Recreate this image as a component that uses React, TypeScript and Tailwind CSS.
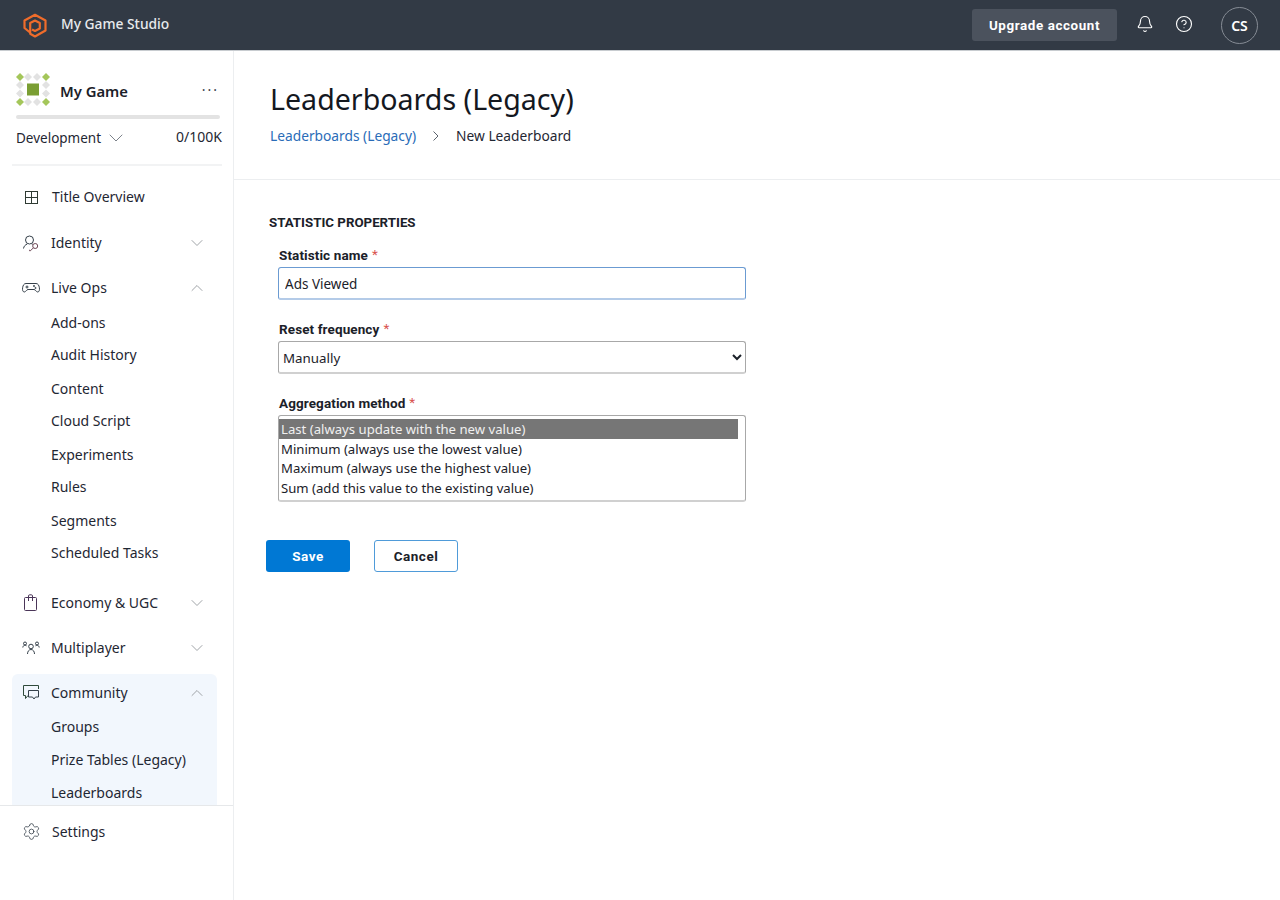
import { ChevronDown, ChevronUp, Bell, CircleHelp, Settings } from 'lucide-react';

const body = "font-['Noto_Sans','Open_Sans',sans-serif]";
const din = "font-['Roboto',sans-serif]";

function StudioLogo() {
  return (
    <svg width="24" height="26" viewBox="0 0 24 26" fill="none" stroke="#ef6c2b" strokeWidth="2.2" strokeLinejoin="round">
      <path d="M7 19.500L1.500 15V7.500L12 1.800l10.500 5.700v10L12 23.500l-4.800-2.800V10L12 7.500l4.800 2.500v5.500L12 18l-3-1.500" />
    </svg>
  );
}

function GameLogo() {
  const dots: [number, number, string][] = [
    [4, 4, '#a4c65a'], [12, 4, '#e2e2e2'], [21, 4, '#e2e2e2'], [30, 4, '#a4c65a'],
    [4, 12, '#e2e2e2'], [30, 12, '#e2e2e2'],
    [4, 20.5, '#e2e2e2'], [30, 20.5, '#e2e2e2'],
    [4, 29, '#a4c65a'], [12, 29, '#e2e2e2'], [21, 29, '#e2e2e2'], [30, 29, '#a4c65a'],
  ];
  return (
    <svg width="34" height="34" viewBox="0 0 34 34">
      {dots.map(([x, y, c]) => (
        <path key={`${x}-${y}`} d={`M${x} ${y - 4}l4 4-4 4-4-4z`} fill={c} />
      ))}
      <rect x="11" y="10.500" width="12" height="12" fill="#7a9e33" />
    </svg>
  );
}

function GridIcon() {
  return (
    <svg width="16" height="16" viewBox="0 0 16 16" fill="none" stroke="#2f3b33" strokeWidth="1">
      <rect x="2.500" y="2.500" width="12" height="12" />
      <path d="M8.500 2.500v12M2.500 8.500h12" />
    </svg>
  );
}

function IdentityIcon() {
  return (
    <svg width="18" height="18" viewBox="0 0 18 18" fill="none" stroke="#35404a" strokeWidth="1">
      <circle cx="7.500" cy="6" r="4" />
      <path d="M1.500 14.500c.4-2.300 1.800-3.800 3.700-4.400" />
      <path d="M9.800 10.200h1" />
      <circle cx="13.200" cy="12" r="2.500" stroke="#6d4655" />
      <path d="M11.400 13.800l-3 3h-.8v-1" stroke="#6d4655" />
    </svg>
  );
}

function GamepadIcon() {
  return (
    <svg width="18" height="18" viewBox="0 0 18 18" fill="none" stroke="#35404a" strokeWidth="1">
      <path d="M4 4.500h10c2 0 3 1.800 3.400 4.300.3 2.200-.2 4.200-1.700 4.200-1.500 0-2.200-2.500-3.700-2.500H6c-1.500 0-2.200 2.500-3.700 2.500C.8 13 .3 11 .6 8.800 1 6.300 2 4.500 4 4.500z" />
      <path d="M3.500 8h3M5 6.500v3" />
      <circle cx="12" cy="7" r=".6" />
      <circle cx="13.500" cy="9" r=".6" />
    </svg>
  );
}

function BagIcon() {
  return (
    <svg width="18" height="18" viewBox="0 0 18 18" fill="none" stroke="#4a3558" strokeWidth="1">
      <rect x="2.500" y="3.500" width="12" height="13" rx="1" />
      <path d="M6.500 7V2a1.200 1.200 0 0 1 1.200-1.200h1.600A1.200 1.200 0 0 1 10.500 2v5" />
    </svg>
  );
}

function PeopleIcon() {
  return (
    <svg width="18" height="14" viewBox="0 0 18 14" fill="none" stroke="#35404a" strokeWidth="1">
      <circle cx="9" cy="5.500" r="2.300" />
      <path d="M5.500 13c0-2.600 1.500-4.500 3.500-4.500s3.500 1.900 3.500 4.500" />
      <circle cx="3" cy="2.500" r="1.500" />
      <path d="M.800 6.500C1 5 1.900 4.200 3 4.200c.6 0 1.100.2 1.500.6" />
      <circle cx="15" cy="2.500" r="1.500" />
      <path d="M17.200 6.500C17 5 16.100 4.200 15 4.200c-.6 0-1.100.2-1.500.6" />
    </svg>
  );
}

function ChatIcon() {
  return (
    <svg width="18" height="17" viewBox="0 0 18 17" fill="none" strokeWidth="1">
      <path d="M16.500 5V1.500h-15v10h2v3l2.500-3" stroke="#2f4a3a" />
      <path d="M6.500 6.500h10v6.500h-3l-1.500 2-1.500-2h-4z" stroke="#35404a" />
    </svg>
  );
}

const SUB_ROW = 'h-[32px] [&:nth-child(2n+3)]:mt-[2px] flex items-center pl-[39px] text-[14px] text-[#1f2733]';

function NavGroup({
  icon,
  label,
  open,
  compact,
  children,
}: {
  icon: React.ReactNode;
  label: string;
  open?: boolean;
  compact?: boolean;
  children?: React.ReactNode;
}) {
  return (
    <div>
      <div className={`${compact ? 'h-[38px]' : 'h-[45px]'} flex items-center text-[14px] text-[#1f2733]`}>
        <div className="w-[39px] pl-[10px] flex items-center">{icon}</div>
        <span className="flex-1">{label}</span>
        {open ? (
          <ChevronUp size={20} strokeWidth={1.2} className="mr-[10px] text-[#a0a4a8]" />
        ) : (
          <ChevronDown size={20} strokeWidth={1.2} className="mr-[10px] text-[#a0a4a8]" />
        )}
      </div>
      {children}
    </div>
  );
}

function Required() {
  return <span className="text-[#d9534f] font-normal ml-[4px] relative -top-[1px]">*</span>;
}

function FieldLabel({ children }: { children: React.ReactNode }) {
  return (
    <label className={`${din} block pl-[1px] text-[13.500px] font-bold text-[#1b2129] tracking-[0.1px] leading-[18px] mb-[3px]`}>
      {children}
      <Required />
    </label>
  );
}

const OPTION = 'pl-[2px] pt-[1px] pb-0 min-h-[19.600px] checked:bg-[linear-gradient(#767676,#767676)] checked:[-webkit-text-fill-color:#f0f0f0]';

export default function App() {
  return (
    <div className={`${body} h-[900px] flex flex-col bg-white overflow-hidden`}>
      <header className="h-[51px] shrink-0 bg-[#323a45] border-b border-[#c8ccd0] flex items-center text-white">
        <div className="ml-[23px] w-[38px] pt-[2px]">
          <StudioLogo />
        </div>
        <span className="text-[13.800px] font-medium text-[#e8eaed] -mt-[2px]">My Game Studio</span>
        <div className="ml-auto flex items-center">
          <button className={`${din} h-[32px] w-[145px] pt-[3px] rounded-[3px] bg-[#4b525d] text-[13.400px] font-bold tracking-[0.6px] text-white`}>
            Upgrade account
          </button>
          <Bell size={18} strokeWidth={1.5} className="ml-[19px] -mt-[2px]" />
          <CircleHelp size={18} strokeWidth={1.5} className="ml-[21px] -mt-[2px]" />
          <div className="ml-[28px] mr-[22px] w-[37px] h-[37px] rounded-full border border-[#868c95] flex items-center justify-center text-[14px] font-semibold">
            CS
          </div>
        </div>
      </header>

      <div className="flex-1 flex min-h-0">
        <aside className="w-[234px] shrink-0 border-r border-[#eceef0] flex flex-col">
          <div className="h-[754px] overflow-hidden pl-[12px]">
            <div className="mr-[11px]">
              <div className="pt-[22px] px-[4px]">
                <div className="flex items-center h-[34px]">
                  <GameLogo />
                  <span className="ml-[10px] mt-[2px] text-[14.800px] font-semibold text-[#1b2129]">My Game</span>
                  <span className="ml-auto -mr-[1px] text-[#3a424c] text-[14px] tracking-[2px] leading-none">···</span>
                </div>
                <div className="mt-[8px] h-[4px] w-[204px] rounded-full bg-[#e3e3e3]" />
                <div className="mt-[7px] flex items-center text-[13.500px] text-[#1f2733] h-[24px]">
                  <span>Development</span>
                  <ChevronDown size={24} strokeWidth={0.8} className="ml-[3px] text-[#5a626c]" />
                  <span className="ml-auto -mr-[4px] -mt-[3px] text-[14px]">0/100K</span>
                </div>
              </div>
              <div className="mt-[14px] h-[2px] bg-[#f2f3f4]" />
            </div>
            <div className="pt-[7px] mr-[16px]">
              <div className="h-[47px] flex items-center text-[14px] text-[#1f2733]">
                <div className="w-[40px] pl-[11px] flex items-center">
                  <GridIcon />
                </div>
                <span>Title Overview</span>
              </div>
              <NavGroup icon={<IdentityIcon />} label="Identity" />
              <NavGroup icon={<GamepadIcon />} label="Live Ops" open>
                <div className="-mt-[3.500px] pb-[11.500px]">
                  {['Add-ons', 'Audit History', 'Content', 'Cloud Script', 'Experiments', 'Rules', 'Segments', 'Scheduled Tasks'].map((s) => (
                    <div key={s} className={SUB_ROW}>
                      {s}
                    </div>
                  ))}
                </div>
              </NavGroup>
              <NavGroup icon={<BagIcon />} label="Economy & UGC" />
              <NavGroup icon={<PeopleIcon />} label="Multiplayer" />
              <div className="mt-[3.500px] rounded-t-[6px] bg-[#f2f7fd]">
                <NavGroup icon={<ChatIcon />} label="Community" open compact>
                  <div className="-mt-[1.500px]">
                    {['Groups', 'Prize Tables (Legacy)', 'Leaderboards'].map((s) => (
                      <div key={s} className="h-[33px] flex items-center pl-[39px] text-[14px] text-[#1f2733]">
                        {s}
                      </div>
                    ))}
                  </div>
                </NavGroup>
              </div>
            </div>
          </div>
          <div className="border-t border-[#e6e8ea] h-[52px] flex items-center text-[14px] text-[#1f2733]">
            <Settings size={19} strokeWidth={1} className="ml-[22px] mr-[11px] text-[#35404a]" />
            <span>Settings</span>
          </div>
        </aside>

        <main className="flex-1 min-w-0">
          <div className="h-[129px] border-b border-[#eceef0] pl-[36px] pt-[29px]">
            <h1 className="text-[28.600px] leading-[38px] text-[#14181f]">Leaderboards (Legacy)</h1>
            <div className="mt-[8px] flex items-center text-[13.750px]">
              <span className="text-[#2a6cb8]">Leaderboards (Legacy)</span>
              <svg width="8" height="12" viewBox="0 0 8 12" fill="none" stroke="#5a626c" className="mx-[16px]">
                <path d="M1.500 1.500L6 6l-4.500 4.500" />
              </svg>
              <span className="text-[#1f2733]">New Leaderboard</span>
            </div>
          </div>

          <div className="pl-[34px] pt-[34px]">
            <h2 className={`${din} pl-[1px] text-[13.300px] font-bold text-[#1b2129] leading-[18px]`}>STATISTIC PROPERTIES</h2>
            <div className="ml-[10px] mt-[14px] w-[468px]">
              <FieldLabel>Statistic name</FieldLabel>
              <input
                defaultValue="Ads Viewed"
                className="block w-full h-[33px] px-[6px] pt-[2px] rounded-[3px] border border-[#6b9bd2] border-b-2 border-b-[#b4cbe8] text-[13.500px] text-[#1b2129] outline-none"
              />
              <div className="mt-[20px]">
                <FieldLabel>Reset frequency</FieldLabel>
                <select className="block w-full h-[33px] pl-0 pt-[2px] rounded-[3px] border border-[#a8a8a8] border-b-2 border-b-[#d0d0d0] text-[13.333px] text-[#1b2129] bg-white appearance-auto outline-none">
                  <option>Manually</option>
                </select>
              </div>
              <div className="mt-[20px]">
                <FieldLabel>Aggregation method</FieldLabel>
                <select
                  size={4}
                  defaultValue="last"
                  className="block w-full h-[87px] pr-[7px] pt-[3px] rounded-[3px] border border-[#a8a8a8] border-b-2 border-b-[#d0d0d0] text-[13.150px] text-[#1b2129] bg-white outline-none overflow-hidden"
                >
                  <option value="last" className={OPTION}>Last (always update with the new value)</option>
                  <option className={OPTION}>Minimum (always use the lowest value)</option>
                  <option className={OPTION}>Maximum (always use the highest value)</option>
                  <option className={OPTION}>Sum (add this value to the existing value)</option>
                </select>
              </div>
            </div>
            <div className={`${din} mt-[38px] -ml-[2px] flex gap-[24px] text-[13.500px] font-bold tracking-[0.5px]`}>
              <button className="h-[32px] w-[84px] rounded-[3px] bg-[#0078d4] text-white">Save</button>
              <button className="h-[32px] w-[84px] rounded-[3px] border border-[#4f9bd9] text-[#1b2129]">Cancel</button>
            </div>
          </div>
        </main>
      </div>
    </div>
  );
}
